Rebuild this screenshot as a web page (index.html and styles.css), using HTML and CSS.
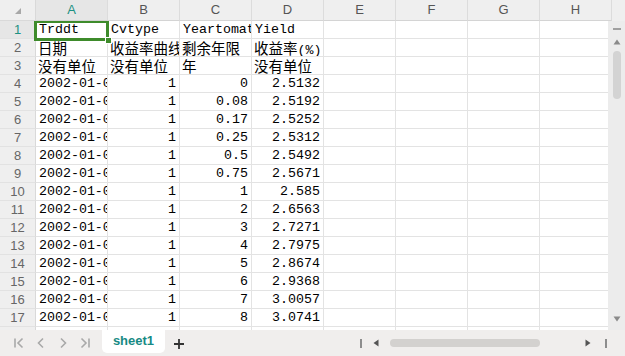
FILE: index.html
```html
<!DOCTYPE html>
<html lang="zh">
<head>
<meta charset="utf-8">
<link rel="stylesheet" href="styles.css">
</head>
<body>
<div class="app">
  <div class="sheet">
    <div class="row head">
      <div class="corner"><svg width="8" height="8" viewBox="0 0 8 8"><path d="M7 1 L7 7 L1 7 Z" fill="#a8a8a8"/></svg></div>
      <div class="ch sel">A</div><div class="ch">B</div><div class="ch">C</div><div class="ch">D</div>
      <div class="ch">E</div><div class="ch">F</div><div class="ch">G</div><div class="ch">H</div>
    </div>
    <div class="body">
      <div class="grid">
        <div class="row"><div class="rh sel">1</div><div class="c">Trddt</div><div class="c">Cvtype</div><div class="c">Yeartomaturity</div><div class="c">Yield</div><div class="c"></div><div class="c"></div><div class="c"></div><div class="c"></div></div>
        <div class="row"><div class="rh">2</div><div class="c cj">日期</div><div class="c cj">收益率曲线类型</div><div class="c cj">剩余年限</div><div class="c cj">收益率<span class="lat">(%)</span></div><div class="c"></div><div class="c"></div><div class="c"></div><div class="c"></div></div>
        <div class="row"><div class="rh">3</div><div class="c cj">没有单位</div><div class="c cj">没有单位</div><div class="c cj">年</div><div class="c cj">没有单位</div><div class="c"></div><div class="c"></div><div class="c"></div><div class="c"></div></div>
        <div class="row"><div class="rh">4</div><div class="c">2002-01-04</div><div class="c n">1</div><div class="c n">0</div><div class="c n">2.5132</div><div class="c"></div><div class="c"></div><div class="c"></div><div class="c"></div></div>
        <div class="row"><div class="rh">5</div><div class="c">2002-01-04</div><div class="c n">1</div><div class="c n">0.08</div><div class="c n">2.5192</div><div class="c"></div><div class="c"></div><div class="c"></div><div class="c"></div></div>
        <div class="row"><div class="rh">6</div><div class="c">2002-01-04</div><div class="c n">1</div><div class="c n">0.17</div><div class="c n">2.5252</div><div class="c"></div><div class="c"></div><div class="c"></div><div class="c"></div></div>
        <div class="row"><div class="rh">7</div><div class="c">2002-01-04</div><div class="c n">1</div><div class="c n">0.25</div><div class="c n">2.5312</div><div class="c"></div><div class="c"></div><div class="c"></div><div class="c"></div></div>
        <div class="row"><div class="rh">8</div><div class="c">2002-01-04</div><div class="c n">1</div><div class="c n">0.5</div><div class="c n">2.5492</div><div class="c"></div><div class="c"></div><div class="c"></div><div class="c"></div></div>
        <div class="row"><div class="rh">9</div><div class="c">2002-01-04</div><div class="c n">1</div><div class="c n">0.75</div><div class="c n">2.5671</div><div class="c"></div><div class="c"></div><div class="c"></div><div class="c"></div></div>
        <div class="row"><div class="rh">10</div><div class="c">2002-01-04</div><div class="c n">1</div><div class="c n">1</div><div class="c n">2.585</div><div class="c"></div><div class="c"></div><div class="c"></div><div class="c"></div></div>
        <div class="row"><div class="rh">11</div><div class="c">2002-01-04</div><div class="c n">1</div><div class="c n">2</div><div class="c n">2.6563</div><div class="c"></div><div class="c"></div><div class="c"></div><div class="c"></div></div>
        <div class="row"><div class="rh">12</div><div class="c">2002-01-04</div><div class="c n">1</div><div class="c n">3</div><div class="c n">2.7271</div><div class="c"></div><div class="c"></div><div class="c"></div><div class="c"></div></div>
        <div class="row"><div class="rh">13</div><div class="c">2002-01-04</div><div class="c n">1</div><div class="c n">4</div><div class="c n">2.7975</div><div class="c"></div><div class="c"></div><div class="c"></div><div class="c"></div></div>
        <div class="row"><div class="rh">14</div><div class="c">2002-01-04</div><div class="c n">1</div><div class="c n">5</div><div class="c n">2.8674</div><div class="c"></div><div class="c"></div><div class="c"></div><div class="c"></div></div>
        <div class="row"><div class="rh">15</div><div class="c">2002-01-04</div><div class="c n">1</div><div class="c n">6</div><div class="c n">2.9368</div><div class="c"></div><div class="c"></div><div class="c"></div><div class="c"></div></div>
        <div class="row"><div class="rh">16</div><div class="c">2002-01-04</div><div class="c n">1</div><div class="c n">7</div><div class="c n">3.0057</div><div class="c"></div><div class="c"></div><div class="c"></div><div class="c"></div></div>
        <div class="row"><div class="rh">17</div><div class="c">2002-01-04</div><div class="c n">1</div><div class="c n">8</div><div class="c n">3.0741</div><div class="c"></div><div class="c"></div><div class="c"></div><div class="c"></div></div>
        <div class="row"><div class="rh">18</div><div class="c">2002-01-04</div><div class="c n">1</div><div class="c n">9</div><div class="c n">3.1419</div><div class="c"></div><div class="c"></div><div class="c"></div><div class="c"></div></div>
        <div class="selbox"><span class="handle"></span></div>
      </div>
      <div class="vscroll">
        <div class="vdash"></div>
        <svg class="varrow" width="8" height="6" viewBox="0 0 8 6"><path d="M4 0.5 L7.5 5.5 L0.5 5.5 Z" fill="#8a8a8a"/></svg>
        <div class="vthumb"></div>
        <div class="vspace"></div>
        <svg class="varrow" width="8" height="6" viewBox="0 0 8 6"><path d="M0.5 0.5 L7.5 0.5 L4 5.5 Z" fill="#8a8a8a"/></svg>
      </div>
    </div>
  </div>
  <div class="bar">
    <div class="nav">
      <svg width="12" height="12" viewBox="0 0 12 12"><path d="M2 1.5 V10.5 M9.5 1.5 L5 6 L9.5 10.5" stroke="#a9a9a9" stroke-width="1.6" fill="none"/></svg>
      <svg width="12" height="12" viewBox="0 0 12 12"><path d="M8 1.5 L3.5 6 L8 10.5" stroke="#a9a9a9" stroke-width="1.6" fill="none"/></svg>
      <svg width="12" height="12" viewBox="0 0 12 12"><path d="M4 1.5 L8.5 6 L4 10.5" stroke="#a9a9a9" stroke-width="1.6" fill="none"/></svg>
      <svg width="12" height="12" viewBox="0 0 12 12"><path d="M2.5 1.5 L7 6 L2.5 10.5 M10 1.5 V10.5" stroke="#a9a9a9" stroke-width="1.6" fill="none"/></svg>
    </div>
    <div class="tab">sheet1</div>
    <svg class="plus" width="12" height="12" viewBox="0 0 12 12"><path d="M6 1 V11 M1 6 H11" stroke="#333" stroke-width="1.8"/></svg>
    <div class="spacer"></div>
    <div class="hscroll">
      <span class="hbar"></span>
      <span class="harrow"><svg width="6" height="8" viewBox="0 0 6 8"><path d="M5.5 0.5 V7.5 L0.5 4 Z" fill="#555"/></svg></span>
      <span class="hthumb"></span>
      <span class="harrow right"><svg width="6" height="8" viewBox="0 0 6 8"><path d="M0.5 0.5 V7.5 L5.5 4 Z" fill="#555"/></svg></span>
      <span class="hbar"></span>
    </div>
  </div>
</div>
</body>
</html>
```
FILE: styles.css
```css
* { box-sizing: border-box; }
html, body { margin: 0; padding: 0; }
body { width: 625px; height: 356px; overflow: hidden; background: #fff; }
.app { width: 625px; height: 356px; display: flex; flex-direction: column; }
.sheet { height: 330px; display: flex; flex-direction: column; overflow: hidden; }
.row { display: grid; grid-template-columns: 36px repeat(8, 72px); height: 18px; }
.head { height: 21px; background: #efefef; flex: none; }
.corner { border-right: 1px solid #d9d9d9; border-bottom: 1px solid #d9d9d9; display: flex; align-items: flex-end; justify-content: flex-end; padding: 0 13px 5px 0; }
.ch { border-right: 1px solid #dcdcdc; border-bottom: 1px solid #d4d4d4; font: 13px "Liberation Sans", Arial, sans-serif; color: #555; text-align: center; line-height: 20px; }
.ch.sel { color: #1d9182; background: #e6e6e6; }
.body { flex: 1; display: flex; min-height: 0; }
.grid { position: relative; width: 608px; overflow: hidden; flex: none; }
.rh { background: #efefef; border-right: 1px solid #d9d9d9; border-bottom: 1px solid #e2e2e2; font: 13px "Liberation Sans", Arial, sans-serif; color: #666; text-align: center; line-height: 17px; }
.rh.sel { color: #1d9182; background: #e6e6e6; }
.c { border-right: 1px solid #e3e3e3; border-bottom: 1px solid #e3e3e3; font: 13.3px "Liberation Mono", "Noto Sans CJK SC", monospace; color: #000; line-height: 18px; padding: 0 2px 0 3px; white-space: nowrap; overflow: hidden; }
.c.cj { font-family: "Noto Sans CJK SC", sans-serif; font-size: 14.5px; line-height: 17px; padding-left: 2px; }
.c .lat { font-family: "Liberation Mono", monospace; font-size: 13.3px; }
.c.n { text-align: right; padding-right: 3px; }
.selbox { position: absolute; left: 34px; top: -1px; width: 75px; height: 21px; border: 3px solid #3e8b2b; }
.handle { position: absolute; right: -6px; bottom: -6px; width: 7px; height: 7px; background: #3e8b2b; border: 1px solid #fff; }
.vscroll { width: 17px; background: #ececec; display: flex; flex-direction: column; align-items: center; padding: 7px 0 8px 1px; }
.vdash { width: 8px; height: 1.5px; background: #a0a0a0; margin-bottom: 9px; }
.varrow { flex: none; }
.vthumb { width: 8px; height: 48px; background: #d3d3d3; border-radius: 4px; margin-top: 6px; }
.vspace { flex: 1; }
.bar { height: 26px; background: #f0eeed; display: flex; align-items: flex-start; flex: none; }
.nav { display: flex; gap: 10px; padding: 7px 0 0 13px; width: 102px; }
.tab { width: 63px; height: 23px; background: #fff; border-radius: 0 0 5px 5px; font: bold 13px "Liberation Sans", Arial, sans-serif; color: #178a84; text-align: center; line-height: 22px; }
.plus { margin: 8px 0 0 8px; }
.spacer { flex: 1; }
.hscroll { display: flex; align-items: center; height: 26px; margin-right: 18px; }
.hbar { width: 2px; height: 9px; background: #8d8d8d; flex: none; }
.harrow { width: 28px; display: flex; justify-content: center; flex: none; }
.hthumb { width: 150px; height: 8px; background: #d3d1cf; border-radius: 4px; flex: none; }
.harrow.right { width: 12px; margin: 0 11px 0 42px; }
```
